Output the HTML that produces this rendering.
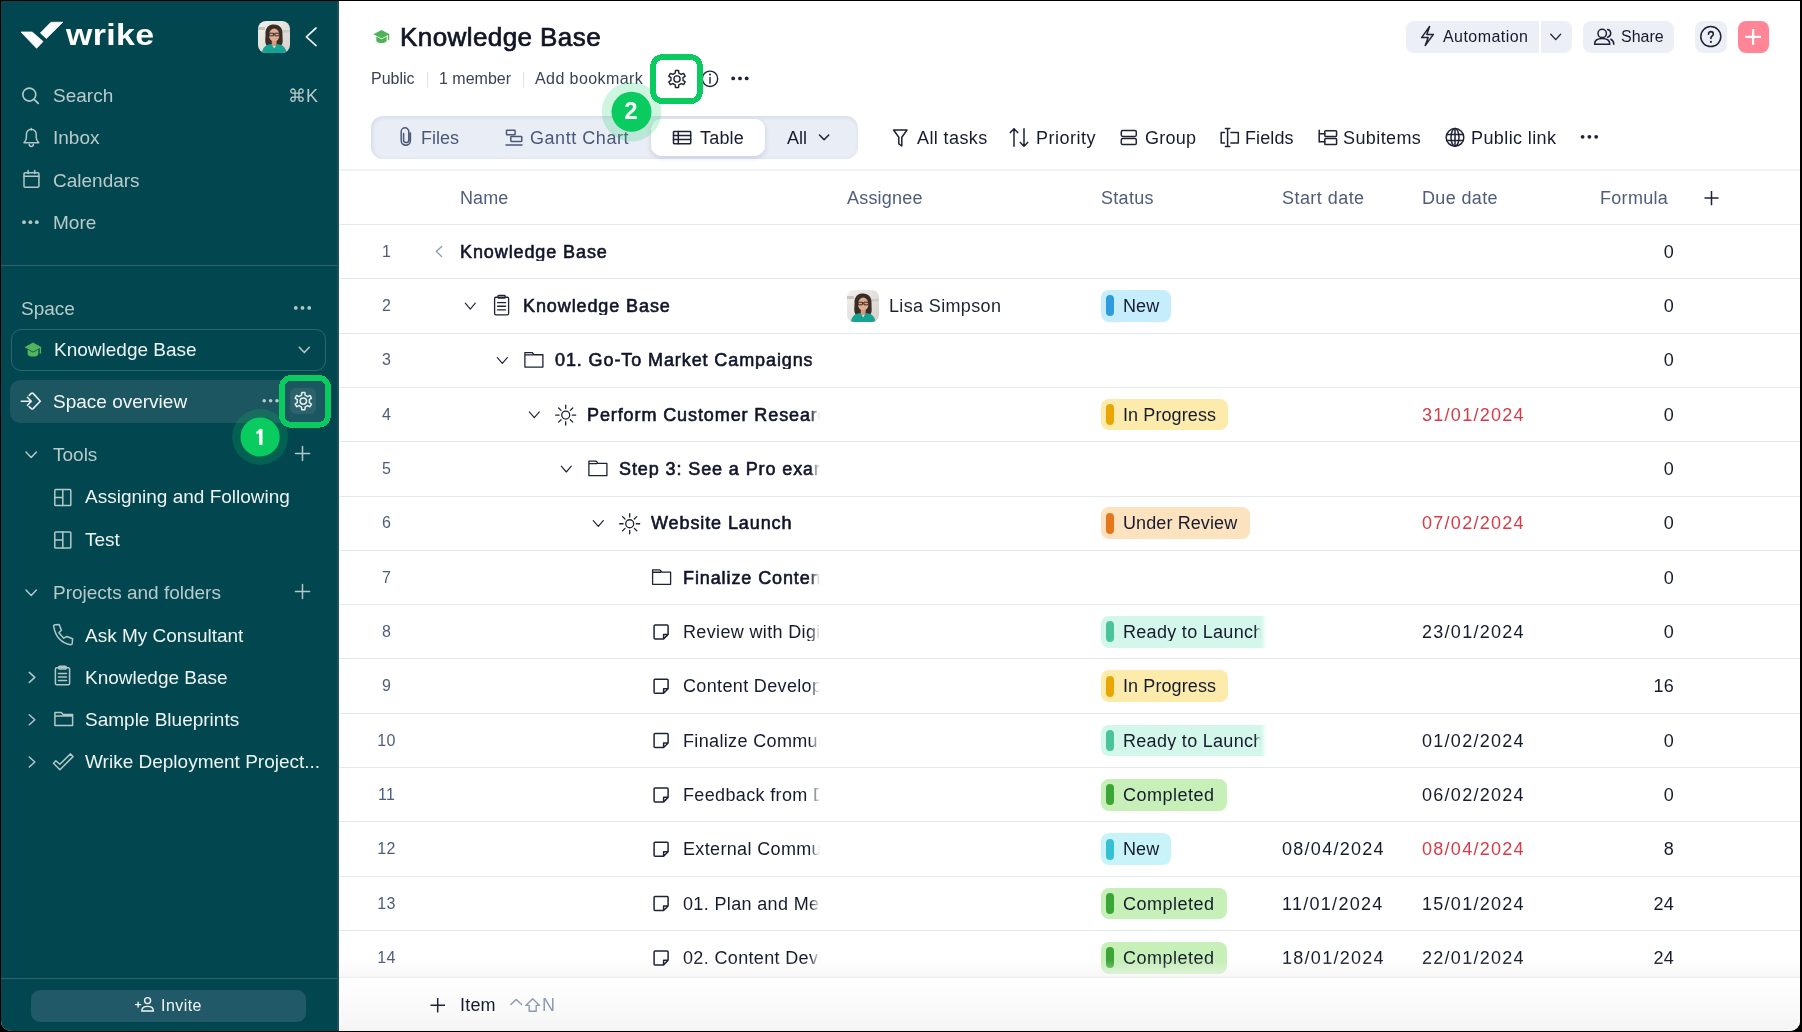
<!DOCTYPE html>
<html><head><meta charset="utf-8"><style>
html,body{margin:0;padding:0;width:1802px;height:1032px;overflow:hidden;background:#000;}
body{position:relative;font-family:"Liberation Sans", sans-serif;}
.t{position:absolute;white-space:nowrap;line-height:1;will-change:transform;}
.clip{overflow:hidden;-webkit-mask-image:linear-gradient(to right,#000 calc(100% - 10px),transparent);}
.r{position:absolute;}
.av{overflow:hidden;background:radial-gradient(ellipse 5px 6px at 50% 40%,#E8BFA2 0,#DDB293 80%,rgba(0,0,0,0) 100%),radial-gradient(ellipse 9px 11px at 50% 45%,#2E211C 0,#3B2A22 75%,rgba(0,0,0,0) 100%),radial-gradient(ellipse 14px 9px at 50% 100%,#19A69C 0,#1BA89D 70%,rgba(0,0,0,0) 100%),linear-gradient(135deg,#EDEBE6,#D9D6D0);}
svg{position:absolute;left:0;top:0;}
</style></head><body>
<div class="r" style="left:1px;top:1px;width:1799px;height:1030px;background:#fff;border-radius:0 0 10px 10px;overflow:hidden;"></div>
<div class="r" style="left:1px;top:1px;width:338px;height:1030px;background:#02474F;border-radius:0 0 0 10px;"></div>
<div class="r" style="left:337px;top:1px;width:2px;height:1030px;background:#1C5159;"></div>
<div class="r" style="left:1px;top:265px;width:336px;height:1px;background:#2F6369;"></div>
<div class="r" style="left:1px;top:978px;width:336px;height:1px;background:#2F6369;"></div>
<div class="t" style="left:53.00px;top:86.12px;font-size:19px;color:#B9CACC;">Search</div>
<div class="t" style="left:288.00px;top:86.76px;font-size:18px;color:#B9CACC;">&#8984;K</div>
<div class="t" style="left:53.00px;top:128.12px;font-size:19px;color:#B9CACC;">Inbox</div>
<div class="t" style="left:53.00px;top:170.82px;font-size:19px;color:#B9CACC;">Calendars</div>
<div class="t" style="left:53.00px;top:213.12px;font-size:19px;color:#B9CACC;">More</div>
<div class="t" style="left:21.00px;top:299.12px;font-size:19px;color:#B9CACC;">Space</div>
<div class="r" style="left:11px;top:328.5px;width:315px;height:42px;border:1px solid #2E6670;border-radius:10px;box-sizing:border-box;"></div>
<div class="t" style="left:54.00px;top:340.02px;font-size:19px;color:#EEF3F3;">Knowledge Base</div>
<div class="r" style="left:10px;top:380px;width:318px;height:42.5px;background:#1C5660;border-radius:10px;"></div>
<div class="r" style="left:290px;top:388px;width:26px;height:26px;background:#2A636B;border-radius:6px;"></div>
<div class="t" style="left:53.00px;top:391.52px;font-size:19px;color:#F4F7F7;">Space overview</div>
<div class="t" style="left:53.00px;top:444.92px;font-size:19px;color:#B9CACC;">Tools</div>
<div class="t" style="left:85.00px;top:487.32px;font-size:19px;color:#EEF3F3;">Assigning and Following</div>
<div class="t" style="left:85.00px;top:529.82px;font-size:19px;color:#EEF3F3;">Test</div>
<div class="t" style="left:53.00px;top:582.82px;font-size:19px;color:#B9CACC;">Projects and folders</div>
<div class="t" style="left:85.00px;top:625.52px;font-size:19px;color:#EEF3F3;">Ask My Consultant</div>
<div class="t" style="left:85.00px;top:667.72px;font-size:19px;color:#EEF3F3;">Knowledge Base</div>
<div class="t" style="left:85.00px;top:710.02px;font-size:19px;color:#EEF3F3;">Sample Blueprints</div>
<div class="t" style="left:85.00px;top:752.12px;font-size:19px;color:#EEF3F3;">Wrike Deployment Project...</div>
<div class="r" style="left:31px;top:990px;width:275px;height:32px;background:#215968;border-radius:9px;"></div>
<div class="t" style="left:161.00px;top:998.06px;font-size:16px;color:#F0F4F5;letter-spacing:0.45px;">Invite</div>
<div class="t" style="left:400.00px;top:23.99px;font-size:26px;color:#101526;letter-spacing:0.42px;-webkit-text-stroke:0.7px #101526;">Knowledge Base</div>
<div class="t" style="left:371.00px;top:70.76px;font-size:16px;color:#3A4255;">Public</div>
<div class="r" style="left:427px;top:72px;width:1px;height:15px;background:#DDE2EA;"></div>
<div class="t" style="left:439.00px;top:70.76px;font-size:16px;color:#3A4255;">1 member</div>
<div class="r" style="left:523px;top:72px;width:1px;height:15px;background:#DDE2EA;"></div>
<div class="t" style="left:535.00px;top:70.76px;font-size:16px;color:#3A4255;letter-spacing:0.42px;">Add bookmark</div>
<div class="r" style="left:371px;top:116px;width:487px;height:43px;background:#E9EDF5;border-radius:12px;box-shadow:inset 1px 1px 4px rgba(40,60,110,0.12);"></div>
<div class="r" style="left:651px;top:119px;width:114px;height:37px;background:#fff;border-radius:10px;box-shadow:0 2px 5px rgba(40,60,110,0.16);"></div>
<div class="t" style="left:421.00px;top:128.76px;font-size:18px;color:#4A5878;">Files</div>
<div class="t" style="left:529.50px;top:128.76px;font-size:18px;color:#4A5878;letter-spacing:0.55px;">Gantt Chart</div>
<div class="t" style="left:699.50px;top:128.76px;font-size:18px;color:#161B2E;letter-spacing:0.2px;">Table</div>
<div class="t" style="left:787.00px;top:128.76px;font-size:18px;color:#161B2E;">All</div>
<div class="t" style="left:916.50px;top:128.76px;font-size:18px;color:#161B2E;letter-spacing:0.4px;">All tasks</div>
<div class="t" style="left:1035.50px;top:128.76px;font-size:18px;color:#161B2E;letter-spacing:0.5px;">Priority</div>
<div class="t" style="left:1144.50px;top:128.76px;font-size:18px;color:#161B2E;letter-spacing:0.25px;">Group</div>
<div class="t" style="left:1245.00px;top:128.76px;font-size:18px;color:#161B2E;letter-spacing:0.1px;">Fields</div>
<div class="t" style="left:1343.00px;top:128.76px;font-size:18px;color:#161B2E;letter-spacing:0.4px;">Subitems</div>
<div class="t" style="left:1471.00px;top:128.76px;font-size:18px;color:#161B2E;letter-spacing:0.4px;">Public link</div>
<div class="r" style="left:339px;top:169px;width:1461px;height:2px;background:#EFF2F6;"></div>
<div class="r" style="left:1406px;top:21px;width:166px;height:31.5px;background:#ECEFF6;border-radius:8px;"></div>
<div class="r" style="left:1539px;top:21px;width:1.6px;height:31.5px;background:#fff;"></div>
<div class="t" style="left:1443.00px;top:29.46px;font-size:16px;color:#161B2E;letter-spacing:0.45px;">Automation</div>
<div class="r" style="left:1583px;top:21px;width:91px;height:31.5px;background:#ECEFF6;border-radius:8px;"></div>
<div class="t" style="left:1620.50px;top:29.46px;font-size:16px;color:#161B2E;">Share</div>
<div class="r" style="left:1695px;top:21px;width:32px;height:31.5px;background:#ECEFF6;border-radius:8px;"></div>
<div class="r" style="left:1737.5px;top:21px;width:31.5px;height:31.5px;background:#FF8597;border-radius:8px;"></div>
<div class="t" style="left:460.00px;top:188.56px;font-size:18px;color:#4F5D7B;letter-spacing:0.1px;">Name</div>
<div class="t" style="left:847.00px;top:188.56px;font-size:18px;color:#4F5D7B;letter-spacing:0.2px;">Assignee</div>
<div class="t" style="left:1101.00px;top:188.56px;font-size:18px;color:#4F5D7B;letter-spacing:0.3px;">Status</div>
<div class="t" style="left:1282.00px;top:188.56px;font-size:18px;color:#4F5D7B;letter-spacing:0.45px;">Start date</div>
<div class="t" style="left:1422.00px;top:188.56px;font-size:18px;color:#4F5D7B;letter-spacing:0.35px;">Due date</div>
<div class="t" style="left:1600.00px;top:188.56px;font-size:18px;color:#4F5D7B;letter-spacing:0.3px;">Formula</div>
<div class="r" style="left:339px;top:224px;width:1461px;height:1px;background:#E4E9F0;"></div>
<div class="r" style="left:339px;top:278px;width:1461px;height:1px;background:#E4E9F0;"></div>
<div class="t" style="left:356px;width:61px;text-align:center;top:243.66px;font-size:16px;letter-spacing:0.3px;color:#4F5D7B;">1</div>
<div class="t clip" style="left:460px;width:360px;top:242.81px;font-size:18px;color:#161B2E;-webkit-text-stroke:0.6px #10152A;color:#10152A;letter-spacing:0.9px;">Knowledge Base</div>
<div class="t" style="left:1574px;width:100px;text-align:right;top:242.81px;font-size:18px;color:#161B2E;letter-spacing:0.3px">0</div>
<div class="r" style="left:339px;top:333px;width:1461px;height:1px;background:#E4E9F0;"></div>
<div class="t" style="left:356px;width:61px;text-align:center;top:297.98px;font-size:16px;letter-spacing:0.3px;color:#4F5D7B;">2</div>
<div class="t clip" style="left:523px;width:297px;top:297.14px;font-size:18px;color:#161B2E;-webkit-text-stroke:0.6px #10152A;color:#10152A;letter-spacing:0.9px;">Knowledge Base</div>
<div class="r" style="left:1101px;top:290.1px;width:70px;height:31.5px;background:#C6EDFC;border-radius:8px;"></div>
<div class="r" style="left:1106.2px;top:295.3px;width:7.8px;height:21px;background:#2D9BDD;border-radius:4px;"></div>
<div class="t" style="left:1123.00px;top:297.14px;font-size:18px;color:#161B2E;letter-spacing:0.1px;">New</div>
<div class="t" style="left:1574px;width:100px;text-align:right;top:297.14px;font-size:18px;color:#161B2E;letter-spacing:0.3px">0</div>
<div class="r" style="left:339px;top:387px;width:1461px;height:1px;background:#E4E9F0;"></div>
<div class="t" style="left:356px;width:61px;text-align:center;top:352.31px;font-size:16px;letter-spacing:0.3px;color:#4F5D7B;">3</div>
<div class="t clip" style="left:555px;width:265px;top:351.46px;font-size:18px;color:#161B2E;-webkit-text-stroke:0.6px #10152A;color:#10152A;letter-spacing:0.9px;">01. Go-To Market Campaigns</div>
<div class="t" style="left:1574px;width:100px;text-align:right;top:351.46px;font-size:18px;color:#161B2E;letter-spacing:0.3px">0</div>
<div class="r" style="left:339px;top:441px;width:1461px;height:1px;background:#E4E9F0;"></div>
<div class="t" style="left:356px;width:61px;text-align:center;top:406.63px;font-size:16px;letter-spacing:0.3px;color:#4F5D7B;">4</div>
<div class="t clip" style="left:587px;width:233px;top:405.79px;font-size:18px;color:#161B2E;-webkit-text-stroke:0.6px #10152A;color:#10152A;letter-spacing:0.9px;">Perform Customer Research</div>
<div class="r" style="left:1101px;top:398.8px;width:127px;height:31.5px;background:#FDEBAB;border-radius:8px;"></div>
<div class="r" style="left:1106.2px;top:404.0px;width:7.8px;height:21px;background:#E8A704;border-radius:4px;"></div>
<div class="t" style="left:1123.00px;top:405.79px;font-size:18px;color:#161B2E;letter-spacing:0.1px;">In Progress</div>
<div class="t" style="left:1422.00px;top:405.79px;font-size:18px;color:#D83A46;letter-spacing:1.28px;">31/01/2024</div>
<div class="t" style="left:1574px;width:100px;text-align:right;top:405.79px;font-size:18px;color:#161B2E;letter-spacing:0.3px">0</div>
<div class="r" style="left:339px;top:496px;width:1461px;height:1px;background:#E4E9F0;"></div>
<div class="t" style="left:356px;width:61px;text-align:center;top:460.96px;font-size:16px;letter-spacing:0.3px;color:#4F5D7B;">5</div>
<div class="t clip" style="left:619px;width:201px;top:460.11px;font-size:18px;color:#161B2E;-webkit-text-stroke:0.6px #10152A;color:#10152A;letter-spacing:0.9px;">Step 3: See a Pro example</div>
<div class="t" style="left:1574px;width:100px;text-align:right;top:460.11px;font-size:18px;color:#161B2E;letter-spacing:0.3px">0</div>
<div class="r" style="left:339px;top:550px;width:1461px;height:1px;background:#E4E9F0;"></div>
<div class="t" style="left:356px;width:61px;text-align:center;top:515.28px;font-size:16px;letter-spacing:0.3px;color:#4F5D7B;">6</div>
<div class="t clip" style="left:651px;width:169px;top:514.44px;font-size:18px;color:#161B2E;-webkit-text-stroke:0.6px #10152A;color:#10152A;letter-spacing:0.9px;">Website Launch</div>
<div class="r" style="left:1101px;top:507.4px;width:149px;height:31.5px;background:#FDE2C0;border-radius:8px;"></div>
<div class="r" style="left:1106.2px;top:512.6px;width:7.8px;height:21px;background:#E5761B;border-radius:4px;"></div>
<div class="t" style="left:1123.00px;top:514.44px;font-size:18px;color:#161B2E;letter-spacing:0.1px;">Under Review</div>
<div class="t" style="left:1422.00px;top:514.44px;font-size:18px;color:#D83A46;letter-spacing:1.28px;">07/02/2024</div>
<div class="t" style="left:1574px;width:100px;text-align:right;top:514.44px;font-size:18px;color:#161B2E;letter-spacing:0.3px">0</div>
<div class="r" style="left:339px;top:604px;width:1461px;height:1px;background:#E4E9F0;"></div>
<div class="t" style="left:356px;width:61px;text-align:center;top:569.61px;font-size:16px;letter-spacing:0.3px;color:#4F5D7B;">7</div>
<div class="t clip" style="left:683px;width:137px;top:568.76px;font-size:18px;color:#161B2E;-webkit-text-stroke:0.6px #10152A;color:#10152A;letter-spacing:0.9px;">Finalize Content</div>
<div class="t" style="left:1574px;width:100px;text-align:right;top:568.76px;font-size:18px;color:#161B2E;letter-spacing:0.3px">0</div>
<div class="r" style="left:339px;top:658px;width:1461px;height:1px;background:#E4E9F0;"></div>
<div class="t" style="left:356px;width:61px;text-align:center;top:623.93px;font-size:16px;letter-spacing:0.3px;color:#4F5D7B;">8</div>
<div class="t clip" style="left:683px;width:137px;top:623.09px;font-size:18px;color:#161B2E;letter-spacing:0.35px;">Review with Digital</div>
<div class="r" style="left:1101px;top:616.1px;width:166px;height:31.5px;background:linear-gradient(to right,#D3F7EA 0,#D3F7EA 158px,rgba(255,255,255,0) 166px);border-radius:8px 0 0 8px;"></div>
<div class="r" style="left:1106.2px;top:621.3px;width:7.8px;height:21px;background:#4CC49B;border-radius:4px;"></div>
<div class="t" style="left:1123.00px;top:623.09px;font-size:18px;color:#161B2E;letter-spacing:0.3px;overflow:hidden;width:139px;">Ready to Launch</div>
<div class="r" style="left:1255px;top:616.1px;width:12px;height:31.5px;background:linear-gradient(to right,rgba(211,247,234,0),#D3F7EA 50%,rgba(255,255,255,1));"></div>
<div class="t" style="left:1422.00px;top:623.09px;font-size:18px;color:#161B2E;letter-spacing:1.28px;">23/01/2024</div>
<div class="t" style="left:1574px;width:100px;text-align:right;top:623.09px;font-size:18px;color:#161B2E;letter-spacing:0.3px">0</div>
<div class="r" style="left:339px;top:713px;width:1461px;height:1px;background:#E4E9F0;"></div>
<div class="t" style="left:356px;width:61px;text-align:center;top:678.26px;font-size:16px;letter-spacing:0.3px;color:#4F5D7B;">9</div>
<div class="t clip" style="left:683px;width:137px;top:677.41px;font-size:18px;color:#161B2E;letter-spacing:0.35px;">Content Development</div>
<div class="r" style="left:1101px;top:670.4px;width:127px;height:31.5px;background:#FDEBAB;border-radius:8px;"></div>
<div class="r" style="left:1106.2px;top:675.6px;width:7.8px;height:21px;background:#E8A704;border-radius:4px;"></div>
<div class="t" style="left:1123.00px;top:677.41px;font-size:18px;color:#161B2E;letter-spacing:0.1px;">In Progress</div>
<div class="t" style="left:1574px;width:100px;text-align:right;top:677.41px;font-size:18px;color:#161B2E;letter-spacing:0.3px">16</div>
<div class="r" style="left:339px;top:767px;width:1461px;height:1px;background:#E4E9F0;"></div>
<div class="t" style="left:356px;width:61px;text-align:center;top:732.58px;font-size:16px;letter-spacing:0.3px;color:#4F5D7B;">10</div>
<div class="t clip" style="left:683px;width:137px;top:731.74px;font-size:18px;color:#161B2E;letter-spacing:0.35px;">Finalize Communication</div>
<div class="r" style="left:1101px;top:724.7px;width:166px;height:31.5px;background:linear-gradient(to right,#D3F7EA 0,#D3F7EA 158px,rgba(255,255,255,0) 166px);border-radius:8px 0 0 8px;"></div>
<div class="r" style="left:1106.2px;top:729.9px;width:7.8px;height:21px;background:#4CC49B;border-radius:4px;"></div>
<div class="t" style="left:1123.00px;top:731.74px;font-size:18px;color:#161B2E;letter-spacing:0.3px;overflow:hidden;width:139px;">Ready to Launch</div>
<div class="r" style="left:1255px;top:724.7px;width:12px;height:31.5px;background:linear-gradient(to right,rgba(211,247,234,0),#D3F7EA 50%,rgba(255,255,255,1));"></div>
<div class="t" style="left:1422.00px;top:731.74px;font-size:18px;color:#161B2E;letter-spacing:1.28px;">01/02/2024</div>
<div class="t" style="left:1574px;width:100px;text-align:right;top:731.74px;font-size:18px;color:#161B2E;letter-spacing:0.3px">0</div>
<div class="r" style="left:339px;top:821px;width:1461px;height:1px;background:#E4E9F0;"></div>
<div class="t" style="left:356px;width:61px;text-align:center;top:786.91px;font-size:16px;letter-spacing:0.3px;color:#4F5D7B;">11</div>
<div class="t clip" style="left:683px;width:137px;top:786.06px;font-size:18px;color:#161B2E;letter-spacing:0.35px;">Feedback from Digital</div>
<div class="r" style="left:1101px;top:779.0px;width:126px;height:31.5px;background:#C6F0B8;border-radius:8px;"></div>
<div class="r" style="left:1106.2px;top:784.2px;width:7.8px;height:21px;background:#3BA535;border-radius:4px;"></div>
<div class="t" style="left:1123.00px;top:786.06px;font-size:18px;color:#161B2E;letter-spacing:0.5px;">Completed</div>
<div class="t" style="left:1422.00px;top:786.06px;font-size:18px;color:#161B2E;letter-spacing:1.28px;">06/02/2024</div>
<div class="t" style="left:1574px;width:100px;text-align:right;top:786.06px;font-size:18px;color:#161B2E;letter-spacing:0.3px">0</div>
<div class="r" style="left:339px;top:876px;width:1461px;height:1px;background:#E4E9F0;"></div>
<div class="t" style="left:356px;width:61px;text-align:center;top:841.23px;font-size:16px;letter-spacing:0.3px;color:#4F5D7B;">12</div>
<div class="t clip" style="left:683px;width:137px;top:840.39px;font-size:18px;color:#161B2E;letter-spacing:0.35px;">External Communication</div>
<div class="r" style="left:1101px;top:833.4px;width:70px;height:31.5px;background:#C8F4F9;border-radius:8px;"></div>
<div class="r" style="left:1106.2px;top:838.6px;width:7.8px;height:21px;background:#35C1D3;border-radius:4px;"></div>
<div class="t" style="left:1123.00px;top:840.39px;font-size:18px;color:#161B2E;letter-spacing:0.1px;">New</div>
<div class="t" style="left:1282.00px;top:840.39px;font-size:18px;color:#161B2E;letter-spacing:1.28px;">08/04/2024</div>
<div class="t" style="left:1422.00px;top:840.39px;font-size:18px;color:#D83A46;letter-spacing:1.28px;">08/04/2024</div>
<div class="t" style="left:1574px;width:100px;text-align:right;top:840.39px;font-size:18px;color:#161B2E;letter-spacing:0.3px">8</div>
<div class="r" style="left:339px;top:930px;width:1461px;height:1px;background:#E4E9F0;"></div>
<div class="t" style="left:356px;width:61px;text-align:center;top:895.56px;font-size:16px;letter-spacing:0.3px;color:#4F5D7B;">13</div>
<div class="t clip" style="left:683px;width:137px;top:894.71px;font-size:18px;color:#161B2E;letter-spacing:0.35px;">01. Plan and Measure</div>
<div class="r" style="left:1101px;top:887.7px;width:126px;height:31.5px;background:#C6F0B8;border-radius:8px;"></div>
<div class="r" style="left:1106.2px;top:892.9px;width:7.8px;height:21px;background:#3BA535;border-radius:4px;"></div>
<div class="t" style="left:1123.00px;top:894.71px;font-size:18px;color:#161B2E;letter-spacing:0.5px;">Completed</div>
<div class="t" style="left:1282.00px;top:894.71px;font-size:18px;color:#161B2E;letter-spacing:1.28px;">11/01/2024</div>
<div class="t" style="left:1422.00px;top:894.71px;font-size:18px;color:#161B2E;letter-spacing:1.28px;">15/01/2024</div>
<div class="t" style="left:1574px;width:100px;text-align:right;top:894.71px;font-size:18px;color:#161B2E;letter-spacing:0.3px">24</div>
<div class="t" style="left:356px;width:61px;text-align:center;top:949.88px;font-size:16px;letter-spacing:0.3px;color:#4F5D7B;">14</div>
<div class="t clip" style="left:683px;width:137px;top:949.04px;font-size:18px;color:#161B2E;letter-spacing:0.35px;">02. Content Development</div>
<div class="r" style="left:1101px;top:942.0px;width:126px;height:31.5px;background:#C6F0B8;border-radius:8px;"></div>
<div class="r" style="left:1106.2px;top:947.2px;width:7.8px;height:21px;background:#3BA535;border-radius:4px;"></div>
<div class="t" style="left:1123.00px;top:949.04px;font-size:18px;color:#161B2E;letter-spacing:0.5px;">Completed</div>
<div class="t" style="left:1282.00px;top:949.04px;font-size:18px;color:#161B2E;letter-spacing:1.28px;">18/01/2024</div>
<div class="t" style="left:1422.00px;top:949.04px;font-size:18px;color:#161B2E;letter-spacing:1.28px;">22/01/2024</div>
<div class="t" style="left:1574px;width:100px;text-align:right;top:949.04px;font-size:18px;color:#161B2E;letter-spacing:0.3px">24</div>
<svg width="32" height="32" viewBox="0 0 32 32" style="position:absolute;left:847px;top:290px"><defs><clipPath id="avc2"><rect width="32" height="32" rx="7"/></clipPath><linearGradient id="avg2" x1="0" y1="0" x2="1" y2="1"><stop offset="0" stop-color="#F1F0EC"/><stop offset="1" stop-color="#D5D2CC"/></linearGradient></defs><g clip-path="url(#avc2)"><rect width="32" height="32" fill="url(#avg2)"/><rect x="0" y="6" width="7" height="3" fill="#C9C6BF"/><rect x="24" y="9" width="8" height="2.5" fill="#CFCBC4"/><path d="M7.5,14 C7,6 11,3.5 16,3.5 C21.5,3.5 25,7 24.5,14 C24.5,19 25.5,22 23,25 L9,25 C6.5,22 7.5,18 7.5,14Z" fill="#3A2B24"/><ellipse cx="16.2" cy="14.2" rx="5.2" ry="6.6" fill="#DDAB90"/><path d="M11.2,12.2 h4.2 v2.6 h-4.2z M17,12.2 h4.2 v2.6 h-4.2z M15.4,13 h1.6" fill="none" stroke="#2A211D" stroke-width="0.9"/><path d="M13.8,20 h4.8 v5 h-4.8z" fill="#D39C80"/><path d="M4,32 C4.5,25.5 9,23.5 13.5,23 L16.2,27.5 L19,23 C23.5,23.5 28,25.5 28.5,32Z" fill="#16A394"/></g></svg>
<div class="t" style="left:889.00px;top:297.26px;font-size:18px;color:#1E2336;letter-spacing:0.35px;">Lisa Simpson</div>
<div class="r" style="left:339px;top:960px;width:1461px;height:17px;background:linear-gradient(rgba(243,243,245,0),rgba(243,243,245,0.6));"></div>
<div class="r" style="left:339px;top:977px;width:1461px;height:1px;background:#ECEDF0;"></div>
<div class="r" style="left:339px;top:978px;width:1461px;height:53px;background:linear-gradient(#FFFFFF,#F5F5F6);border-radius:0 0 10px 0;"></div>
<div class="t" style="left:459.50px;top:996.36px;font-size:18px;color:#161B2E;letter-spacing:0.2px;">Item</div>
<div class="t" style="left:542.00px;top:996.36px;font-size:18px;color:#8D9AB5;">N</div>
<svg width="1802" height="1032" viewBox="0 0 1802 1032"><g fill="none" stroke="#B3C6C9" stroke-width="1.5" stroke-linecap="round" stroke-linejoin="round"><circle cx="29.3" cy="94.6" r="6.5" stroke-width="1.7"/><path d="M34.1,99.4 L38.2,103.4" stroke-width="1.8"/><path d="M31.3,128.4v1.6 M24,142.8 h14.8 c-1.6,-1.5 -2.6,-3 -2.6,-5.2 v-3.4 a4.9,4.9 0 0 0 -9.8,0 v3.4 c0,2.2 -0.9,3.7 -2.4,5.2z M29.3,144.4 a2,2 0 0 0 4,0"/><rect x="24" y="172.7" width="14.9" height="14.6" rx="1.2"/><path d="M24,176.3 h14.9 M28.1,170.5 v3 M34.7,170.5 v3"/></g><g fill="#B3C6C9"><circle cx="24" cy="222.2" r="1.9"/><circle cx="30.4" cy="222.2" r="1.9"/><circle cx="36.8" cy="222.2" r="1.9"/></g><g fill="#B3C6C9"><circle cx="295.8" cy="307.9" r="1.9"/><circle cx="302.5" cy="307.9" r="1.9"/><circle cx="309.2" cy="307.9" r="1.9"/></g><g fill="#52B55A"><path d="M24.5,347.2 L33,342.6 L41.5,347.2 L33,351.8Z"/><path d="M27.6,349.6 v4.3 c0,1.6 2.4,2.7 5.4,2.7 s5.4,-1.1 5.4,-2.7 v-4.3 l-5.4,2.9z"/><rect x="39.7" y="347.4" width="1.4" height="6.2"/></g><path d="M299.3,347.2 L304.3,352.6 L309.3,347.2" fill="none" stroke="#B3C6C9" stroke-width="1.5" stroke-linecap="round" stroke-linejoin="round"/><g fill="none" stroke="#E6EEEF" stroke-width="1.6" stroke-linecap="round" stroke-linejoin="round"><path d="M21.3,401.3 H31 M27.4,397.3 L31.3,401.3 L27.4,405.3"/><path d="M29.2,395.4 L31.3,393.4 q0.9,-0.8 1.8,0 L40.3,401.3 L33.1,408.6 q-0.9,0.8 -1.8,0 L29.2,406.6"/></g><g fill="#B9CBCE"><circle cx="264.2" cy="400.8" r="1.8"/><circle cx="270.6" cy="400.8" r="1.8"/><circle cx="277" cy="400.8" r="1.8"/></g><g fill="none" stroke="#E6EEEF" stroke-width="1.5" stroke-linejoin="round"><path d="M301.51,395.16 L301.74,392.54 L304.86,392.54 L305.09,395.16 L307.54,396.58 L309.93,395.47 L311.49,398.17 L309.34,399.68 L309.34,402.52 L311.49,404.03 L309.93,406.73 L307.54,405.62 L305.09,407.04 L304.86,409.66 L301.74,409.66 L301.51,407.04 L299.06,405.62 L296.67,406.73 L295.11,404.03 L297.26,402.52 L297.26,399.68 L295.11,398.17 L296.67,395.47 L299.06,396.58Z"/><circle cx="303.3" cy="401.1" r="3.2"/></g><g fill="none" stroke="#B3C6C9" stroke-width="1.5" stroke-linecap="round" stroke-linejoin="round"><path d="M26,452 L31.2,457.5 L36.4,452"/><path d="M295.5,453.6 H309.6 M302.5,446.5 V460.6"/><path d="M26,590 L31.2,595.5 L36.4,590"/><path d="M295.5,591.6 H309.6 M302.5,584.5 V598.6"/><rect x="54.8" y="489.6" width="16" height="16" rx="0.8"/><path d="M62.8,489.6 V505.6 M54.8,497.6 H62.8"/><rect x="54.8" y="532" width="16" height="16" rx="0.8"/><path d="M62.8,532 V548 M54.8,540 H62.8"/><path d="M53.6,626.2 q0,-1.2 1.3,-1.4 L59.2,624.4 L61.4,630.3 L58.9,632.8 L63.7,638.2 L66.9,636.5 L72.6,638.8 L72.2,643.6 q-0.2,1.2 -1.4,1.2 Q56.5,642.5 53.6,626.2Z"/><path d="M29.3,672.4 L34.8,677.4 L29.3,682.4"/><path d="M29.3,714.7 L34.8,719.7 L29.3,724.7"/><path d="M29.3,757 L34.8,762 L29.3,767"/><rect x="55.4" y="667.8" width="14.2" height="17" rx="1.4"/><rect x="58.8" y="666.2" width="7.4" height="2.8" rx="0.8"/><path d="M58.5,673.4 H66.5 M58.5,677 H66.5 M58.5,680.6 H66.5"/><path d="M54.9,725.6 V712.6 H61.3 L63.1,714.6 H72.6 V725.6Z M54.9,716 H72.6"/><path d="M53.5,763.3 L55.9,760.8 L59.9,764.2 L70.5,753.9 L73,756.6 L59.9,769.8Z"/></g><g fill="none" stroke="#F0F4F5" stroke-width="1.4" stroke-linecap="round"><path d="M135.6,1004.6 h5 M138.1,1002.1 v5"/><circle cx="147.6" cy="1000.6" r="3"/><path d="M141.8,1011 q0,-4.6 5.8,-4.6 q5.8,0 5.8,4.6 z"/></g><g fill="#50B257"><path d="M373.4,34.2 L381.5,29.9 L389.6,34.2 L381.5,38.5Z"/><path d="M376.3,36.5 v4 c0,1.5 2.3,2.6 5.2,2.6 s5.2,-1.1 5.2,-2.6 v-4 l-5.2,2.8z"/><rect x="387.9" y="34.4" width="1.3" height="5.8"/></g><g fill="none" stroke="#1E2335" stroke-width="1.4" stroke-linejoin="round"><path d="M675.21,73.06 L675.44,70.44 L678.56,70.44 L678.79,73.06 L681.24,74.48 L683.63,73.37 L685.19,76.07 L683.04,77.58 L683.04,80.42 L685.19,81.93 L683.63,84.63 L681.24,83.52 L678.79,84.94 L678.56,87.56 L675.44,87.56 L675.21,84.94 L672.76,83.52 L670.37,84.63 L668.81,81.93 L670.96,80.42 L670.96,77.58 L668.81,76.07 L670.37,73.37 L672.76,74.48Z"/><circle cx="677" cy="79" r="3.1"/></g><g fill="none" stroke="#1E2335" stroke-width="1.4" stroke-linecap="round"><circle cx="710" cy="78.8" r="7.7"/><path d="M710,77.5 V83.2"/></g><circle cx="710" cy="74.6" r="1" fill="#1E2335"/><g fill="#1E2335"><circle cx="733.2" cy="78.4" r="1.9"/><circle cx="740" cy="78.4" r="1.9"/><circle cx="746.7" cy="78.4" r="1.9"/></g><g fill="none" stroke="#4A5878" stroke-width="1.5" stroke-linecap="round" stroke-linejoin="round"><path d="M403.6,133.5 V140 a2.6,2.6 0 0 0 5.2,0 V131.6 a3.8,3.8 0 0 0 -7.6,0 V140.6 a4.6,4.6 0 0 0 9.2,0 V133"/><rect x="506.5" y="130.2" width="8.6" height="4.6" rx="0.6"/><rect x="510.8" y="136.6" width="11" height="4.8" rx="0.6"/><path d="M506,145 H522"/></g><g fill="none" stroke="#1E2335" stroke-width="1.5" stroke-linecap="round" stroke-linejoin="round"><rect x="673.5" y="131.5" width="17.2" height="12.2" rx="0.6"/><path d="M673.5,135.6 H690.7 M673.5,139.6 H690.7 M678.3,131.5 V143.7"/><path d="M819.5,135 L824.1,139.8 L828.7,135"/><path d="M893.6,130 H907 L901.8,137.2 V146 L898.8,143.8 V137.2Z"/><path d="M1014,128.8 V146.2 M1010.3,132.6 L1014,128.8 L1017.7,132.6 M1024,128.8 V146.2 M1020.3,142.4 L1024,146.2 L1027.7,142.4"/><rect x="1121.3" y="130.6" width="15" height="5.8" rx="1.4"/><rect x="1121.3" y="138.6" width="15" height="6" rx="1.4"/><path d="M1224.5,132.5 H1221.2 V143 H1224.5 M1227.6,128.6 V146.6 M1225.4,128.6 H1229.8 M1225.4,146.6 H1229.8 M1230.9,132.5 H1238.3 V143 H1230.9"/><path d="M1319.2,130.2 V142 M1319.2,133.8 H1324.8 M1319.2,141.8 H1324.8"/><rect x="1324.8" y="130.8" width="11.8" height="5.6" rx="0.8"/><rect x="1324.8" y="138.6" width="11.8" height="6" rx="0.8"/><circle cx="1455" cy="137.4" r="8.8"/><ellipse cx="1455" cy="137.4" rx="4" ry="8.8"/><path d="M1446.6,134.4 H1463.4 M1446.6,140.4 H1463.4 M1455,128.6 V146.2"/></g><g fill="#1E2335"><circle cx="1582.6" cy="136.8" r="1.9"/><circle cx="1589.4" cy="136.8" r="1.9"/><circle cx="1596.2" cy="136.8" r="1.9"/></g><g fill="none" stroke="#1E2335" stroke-width="1.5" stroke-linecap="round" stroke-linejoin="round"><path d="M1429.6,26.4 L1421.6,37.6 H1428.2 L1425.2,45.6 L1433.4,34.4 H1426.8Z"/><path d="M1550.8,34.3 L1555.7,39.6 L1560.6,34.3" stroke-width="1.3"/><circle cx="1602.2" cy="33.4" r="4.2"/><path d="M1594.6,44.2 q0,-5.6 7.6,-5.6 q7.6,0 7.6,5.6z M1607.6,29.4 a4,4 0 0 1 0,7.8 M1610.8,39.2 q3,1.4 3,5"/><circle cx="1710.8" cy="36.6" r="10"/></g><path d="M1708.5,34.3 q0,-2.7 2.4,-2.7 q2.4,0 2.4,2.4 q0,1.5 -1.5,2.3 q-0.9,0.5 -0.9,1.8 v0.4" fill="none" stroke="#1E2335" stroke-width="1.6" stroke-linecap="round"/><circle cx="1710.9" cy="41.9" r="1.05" fill="#1E2335"/><path d="M1745.2,36.8 H1761 M1753.1,29 V44.8" stroke="#fff" stroke-width="2.3"/><path d="M1704.5,198 H1718.5 M1711.5,191 V205.2" stroke="#1E2335" stroke-width="1.5"/><g fill="none" stroke="#8D9AB5" stroke-width="1.4" stroke-linejoin="round" stroke-linecap="round"><path d="M510.8,1004.6 L516.2,999.4 L521.6,1004.6"/><path d="M532.7,998.8 L539.6,1005.4 H536.2 V1011.2 H529.2 V1005.4 H525.8Z"/></g><path d="M430.5,1005.2 H445 M437.7,998 V1012.4" stroke="#1E2335" stroke-width="1.5"/><g fill="none" stroke="#1E2335" stroke-width="1.3" stroke-linecap="round" stroke-linejoin="round"><path d="M441.6,246.5 L436.4,251.5 L441.6,256.5" stroke="#8C98B1"/><path d="M465.3,303.22499999999997 L470.3,309.025 L475.3,303.22499999999997" stroke-width="1.15"/><path d="M497.3,357.54999999999995 L502.3,363.34999999999997 L507.3,357.54999999999995" stroke-width="1.15"/><path d="M529.3,411.875 L534.3,417.675 L539.3,411.875" stroke-width="1.15"/><path d="M561.3,466.2 L566.3,472.0 L571.3,466.2" stroke-width="1.15"/><path d="M593.3,520.525 L598.3,526.3249999999999 L603.3,520.525" stroke-width="1.15"/><rect x="494.6" y="297.22499999999997" width="14" height="17.6" rx="1.3"/><rect x="498" y="295.425" width="7.2" height="2.8" rx="0.8"/><path d="M497.6,302.625 H505.6 M497.6,306.22499999999997 H505.6 M497.6,309.825 H505.6"/><path d="M524.9,367.04999999999995 V352.54999999999995 H532.1 L534.1999999999999,354.75 H542.9 V367.04999999999995Z M524.9,354.95 H532.9"/><path d="M588.9,475.7 V461.2 H596.1 L598.1999999999999,463.40000000000003 H606.9 V475.7Z M588.9,463.6 H596.9"/><path d="M652.6,584.35 V569.85 H659.8000000000001 L661.9,572.0500000000001 H670.6 V584.35Z M652.6,572.25 H660.6"/><circle cx="565.7" cy="415.07500000000005" r="4.0"/><path d="M572.30,415.08L575.70,415.08M570.37,419.74L572.77,422.15M565.70,421.68L565.70,425.08M561.03,419.74L558.63,422.15M559.10,415.08L555.70,415.08M561.03,410.41L558.63,408.00M565.70,408.48L565.70,405.08M570.37,410.41L572.77,408.00"/><circle cx="629.7" cy="523.725" r="4.0"/><path d="M636.30,523.73L639.70,523.73M634.37,528.39L636.77,530.80M629.70,530.33L629.70,533.73M625.03,528.39L622.63,530.80M623.10,523.73L619.70,523.73M625.03,519.06L622.63,516.65M629.70,517.12L629.70,513.73M634.37,519.06L636.77,516.65"/><path d="M668.1,634.3750000000001 V625.9250000000001 q0,-1 -1,-1 H655.1 q-1,0 -1,1 V637.9250000000001 q0,1 1,1 H663.6 Z M663.6,638.9250000000001 V634.3750000000001 H668.1" stroke-width="1.5"/><path d="M668.1,688.7 V680.25 q0,-1 -1,-1 H655.1 q-1,0 -1,1 V692.25 q0,1 1,1 H663.6 Z M663.6,693.25 V688.7 H668.1" stroke-width="1.5"/><path d="M668.1,743.025 V734.5749999999999 q0,-1 -1,-1 H655.1 q-1,0 -1,1 V746.5749999999999 q0,1 1,1 H663.6 Z M663.6,747.5749999999999 V743.025 H668.1" stroke-width="1.5"/><path d="M668.1,797.35 V788.9 q0,-1 -1,-1 H655.1 q-1,0 -1,1 V800.9 q0,1 1,1 H663.6 Z M663.6,801.9 V797.35 H668.1" stroke-width="1.5"/><path d="M668.1,851.6750000000001 V843.225 q0,-1 -1,-1 H655.1 q-1,0 -1,1 V855.225 q0,1 1,1 H663.6 Z M663.6,856.225 V851.6750000000001 H668.1" stroke-width="1.5"/><path d="M668.1,906.0000000000001 V897.5500000000001 q0,-1 -1,-1 H655.1 q-1,0 -1,1 V909.5500000000001 q0,1 1,1 H663.6 Z M663.6,910.5500000000001 V906.0000000000001 H668.1" stroke-width="1.5"/><path d="M668.1,960.325 V951.875 q0,-1 -1,-1 H655.1 q-1,0 -1,1 V963.875 q0,1 1,1 H663.6 Z M663.6,964.875 V960.325 H668.1" stroke-width="1.5"/></g></svg>
<div class="t" style="left:66.00px;top:20.11px;font-size:30px;color:#FFFFFF;font-weight:700;transform:scaleX(1.13);transform-origin:0 0;letter-spacing:0.3px;">wrike</div>
<svg width="32" height="32" viewBox="0 0 32 32" style="position:absolute;left:258px;top:21px"><defs><clipPath id="avc1"><rect width="32" height="32" rx="8"/></clipPath><linearGradient id="avg1" x1="0" y1="0" x2="1" y2="1"><stop offset="0" stop-color="#F1F0EC"/><stop offset="1" stop-color="#D5D2CC"/></linearGradient></defs><g clip-path="url(#avc1)"><rect width="32" height="32" fill="url(#avg1)"/><rect x="0" y="6" width="7" height="3" fill="#C9C6BF"/><rect x="24" y="9" width="8" height="2.5" fill="#CFCBC4"/><path d="M7.5,14 C7,6 11,3.5 16,3.5 C21.5,3.5 25,7 24.5,14 C24.5,19 25.5,22 23,25 L9,25 C6.5,22 7.5,18 7.5,14Z" fill="#3A2B24"/><ellipse cx="16.2" cy="14.2" rx="5.2" ry="6.6" fill="#DDAB90"/><path d="M11.2,12.2 h4.2 v2.6 h-4.2z M17,12.2 h4.2 v2.6 h-4.2z M15.4,13 h1.6" fill="none" stroke="#2A211D" stroke-width="0.9"/><path d="M13.8,20 h4.8 v5 h-4.8z" fill="#D39C80"/><path d="M4,32 C4.5,25.5 9,23.5 13.5,23 L16.2,27.5 L19,23 C23.5,23.5 28,25.5 28.5,32Z" fill="#16A394"/></g></svg>
<svg style="position:absolute;left:0;top:0" width="1802" height="1032"><g fill="#FFFFFF" stroke="#FFFFFF" stroke-width="0.8" stroke-linejoin="round"><path d="M21,32 L31.4,32 Q32.2,32 32.8,32.6 L43,41.5 L36.6,48.3Z"/><path d="M40.4,33 L50.2,23 Q50.9,22.3 51.8,22.3 L62.8,22.2 L46.4,38.4Z"/></g><path d="M316,28 L306.4,36.8 L316,45.6" fill="none" stroke="#E8EEEF" stroke-width="1.7" stroke-linecap="round" stroke-linejoin="round"/><rect x="281.9" y="377.9" width="46" height="46.9" rx="9" fill="none" stroke="#0ACB5F" stroke-width="5.7" shape-rendering="crispEdges"/><rect x="653.2" y="57.1" width="46.7" height="43.9" rx="9" fill="none" stroke="#0ACB5F" stroke-width="5.7" shape-rendering="crispEdges"/><circle cx="260.1" cy="437" r="27.9" fill="#0ACB5F" fill-opacity="0.2"/><circle cx="260.1" cy="437" r="19.6" fill="#0ACB5F"/><circle cx="631.5" cy="111.8" r="29.8" fill="#0ACB5F" fill-opacity="0.2"/><circle cx="631.5" cy="111.8" r="20" fill="#0ACB5F"/></svg>
<svg style="position:absolute;left:0;top:0" width="400" height="500"><rect x="259.1" y="429.3" width="3.4" height="15.6" fill="#fff"/><path d="M257.6,432.5 L260.6,430.4" stroke="#fff" stroke-width="2.6" stroke-linecap="square"/></svg>
<div class="t" style="left:621.30px;top:98.88px;font-size:24px;color:#FFFFFF;font-weight:700;width:20px;text-align:center;">2</div>
</body></html>
